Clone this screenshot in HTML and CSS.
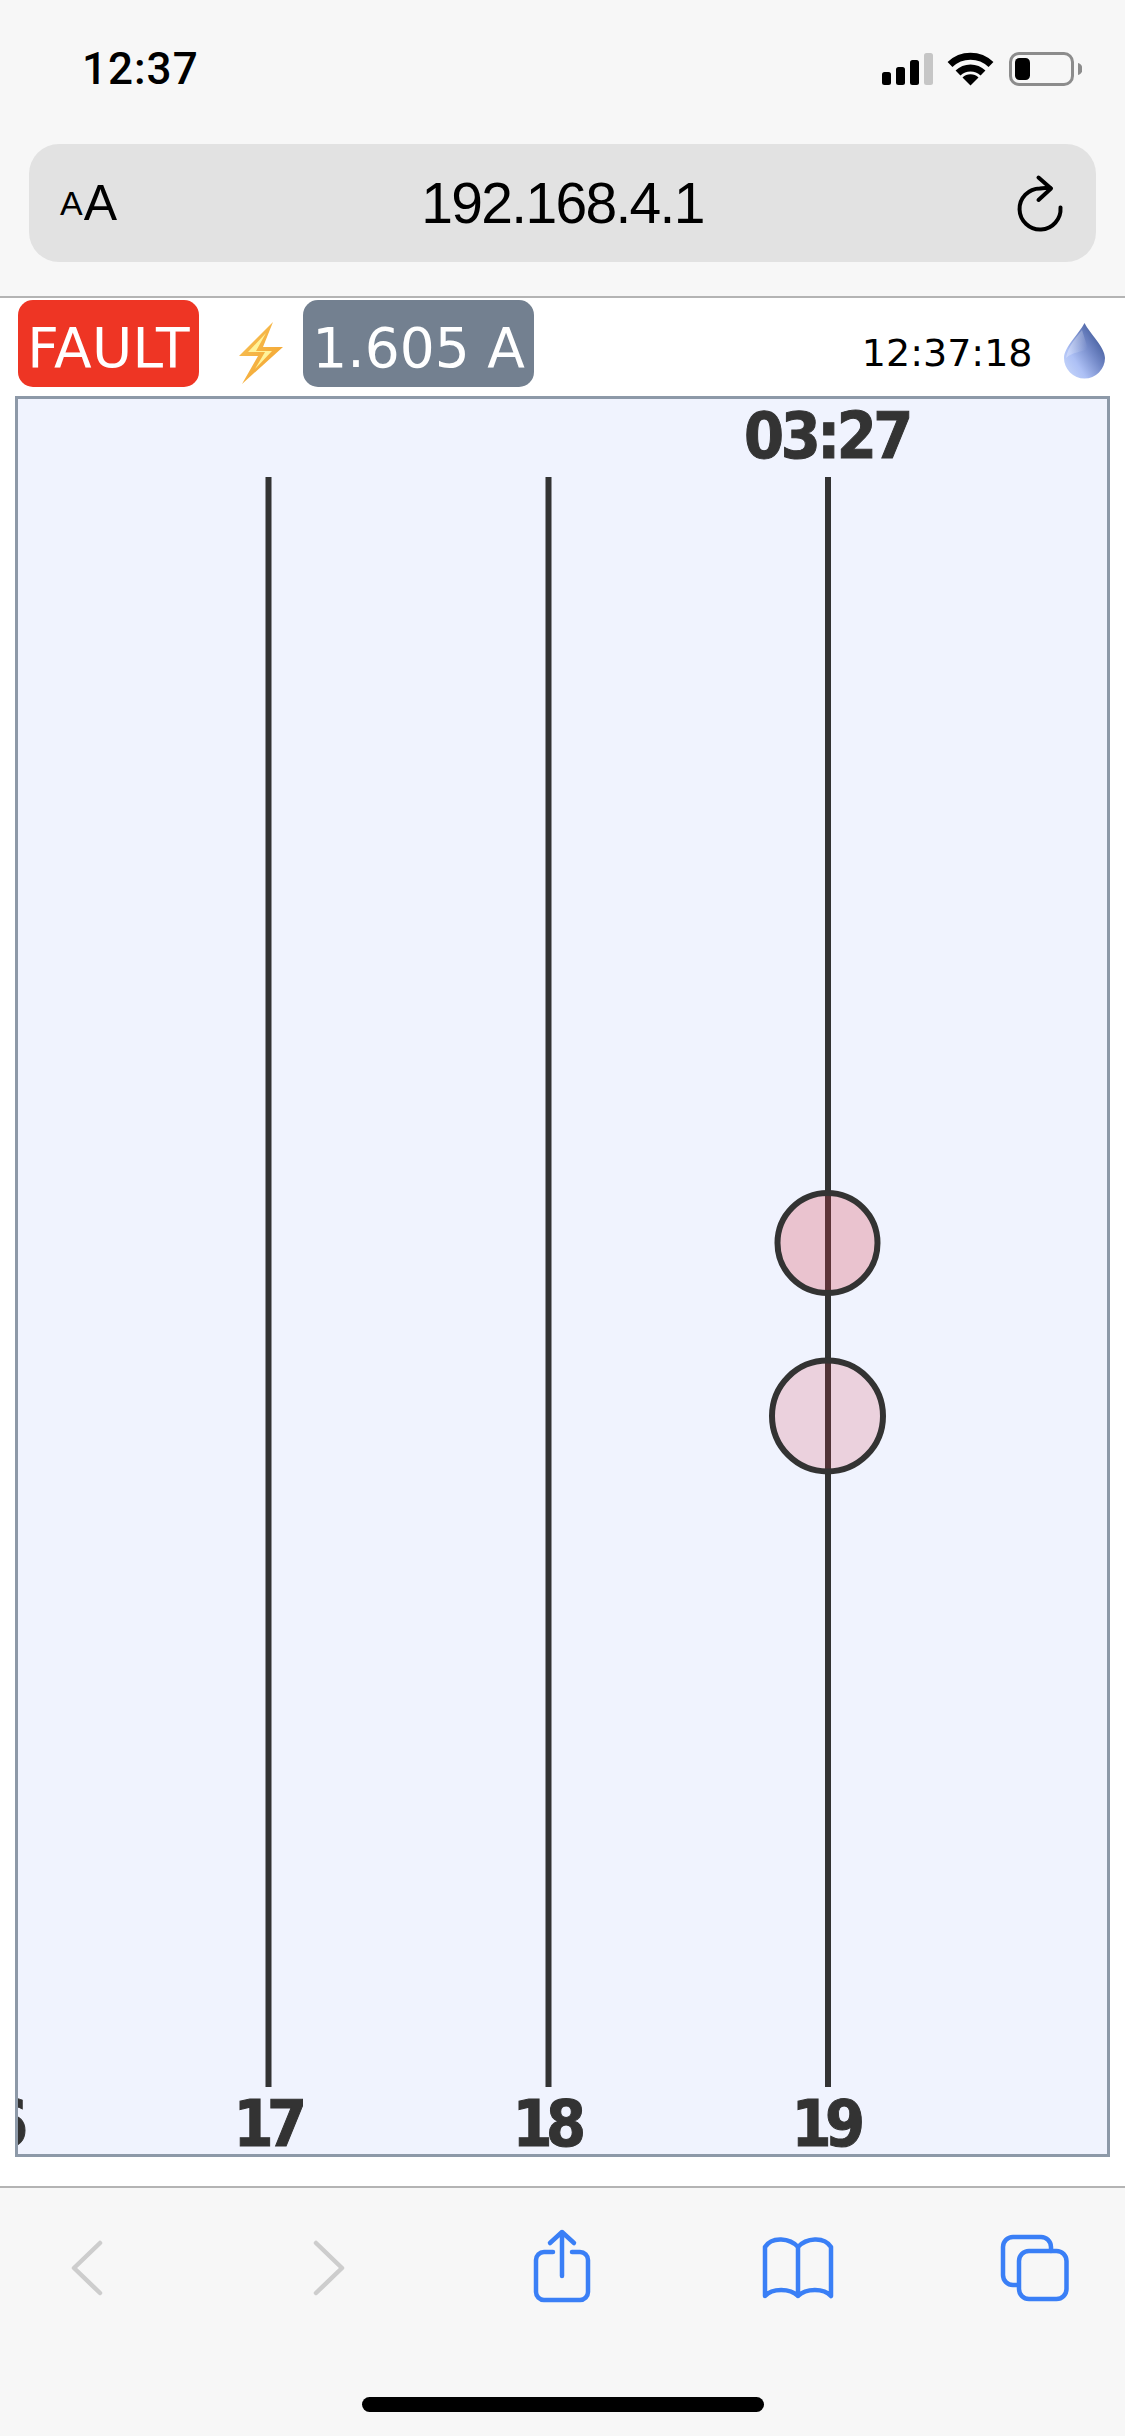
FILE: index.html
```html
<!DOCTYPE html>
<html lang="en">
<head>
<meta charset="utf-8">
<title>192.168.4.1</title>
<link rel="stylesheet" href="styles.css">
</head>
<body>
<div class="phone">
  <header class="top-chrome">
    <div class="status">
      <span class="status-time">12:37</span>
      <svg class="status-icons" viewBox="882 50 200 38" width="200" height="38">
        <rect class="ink" x="882" y="72" width="9" height="13" rx="2.5"/>
        <rect class="ink" x="896" y="67" width="9" height="18" rx="2.5"/>
        <rect class="ink" x="910" y="60" width="9" height="25" rx="2.5"/>
        <rect class="bar-off" x="924" y="53" width="9" height="32" rx="2.5"/>
        <path class="wifi" d="M950 64.5a29.5 29.5 0 0 1 41 0"/>
        <path class="wifi" d="M958 73a18 18 0 0 1 25 0"/>
        <path class="ink" d="M970.5 85.5l-8-8a11.5 11.5 0 0 1 16 0z"/>
        <rect class="batt" x="1010.5" y="53.5" width="62" height="31" rx="8.5"/>
        <rect class="ink" x="1015" y="58" width="15" height="22" rx="4.5"/>
        <path class="batt-nub" d="M1078 63c3 1 4.500 3 4.500 6s-1.500 5-4.500 6z"/>
      </svg>
    </div>
    <div class="address">
      <span class="aa"><span class="aa-small">A</span><span class="aa-big">A</span></span>
      <span class="url">192.168.4.1</span>
      <svg class="reload" viewBox="1014 172 52 62" width="52" height="62">
        <path class="reload-stroke" d="M1060.500 207.500A20.500 20.500 0 1 1 1040 188.500C1044 187.500 1047 187.800 1050.500 188.300"/>
        <path class="reload-stroke" d="M1038.500 177.500L1051 188.500L1038.500 200"/>
      </svg>
    </div>
  </header>

  <main class="page">
    <div class="toolbar">
      <span class="badge badge-fault">FAULT</span>
      <svg class="bolt" viewBox="238 321 46 64" width="46" height="64">
        <defs>
          <linearGradient id="boltEdge" x1="0" y1="0" x2="1" y2="1">
            <stop offset="0" stop-color="#f7c45a"/>
            <stop offset="1" stop-color="#f3a02a"/>
          </linearGradient>
        </defs>
        <polygon fill="url(#boltEdge)" points="273,322 239,356 258,356 242,384 283,347 263,347"/>
        <polygon fill="#fff39a" points="266,333 248,352 265,352 255,369 272,351 256,351"/>
      </svg>
      <span class="badge badge-current">1.605 A</span>
      <span class="clock">12:37:18</span>
      <svg class="drop" viewBox="1062 321 45 59" width="45" height="59">
        <defs>
          <linearGradient id="dropFill" x1="0.95" y1="0.25" x2="0.2" y2="0.9">
            <stop offset="0" stop-color="#3e5797"/>
            <stop offset="0.4" stop-color="#7389c8"/>
            <stop offset="0.8" stop-color="#adc0f5"/>
            <stop offset="1" stop-color="#bccdf8"/>
          </linearGradient>
          <linearGradient id="dropShine" x1="0" y1="0" x2="1" y2="0.6">
            <stop offset="0" stop-color="#ffffff" stop-opacity="0.55"/>
            <stop offset="1" stop-color="#ffffff" stop-opacity="0"/>
          </linearGradient>
        </defs>
        <path fill="url(#dropFill)" d="M1084.500 323C1079 334 1064 347 1064 358A20.500 20.500 0 0 0 1105 358C1105 347 1090 334 1084.500 323Z"/>
        <path fill="url(#dropShine)" d="M1082 330C1076 338 1068 346 1066 358C1072 352 1082 352 1088 349Z"/>
      </svg>
    </div>

    <div class="chart">
      <svg class="chart-svg" viewBox="18 399 1089 1755" width="1089" height="1755">
        <defs>
          <clipPath id="plotClip"><rect x="18" y="399" width="1089" height="1755"/></clipPath>
        </defs>
        <text class="chart-label" x="827" y="458">03:27</text>
        <line class="tick" x1="268.500" y1="477" x2="268.500" y2="2087"/>
        <line class="tick" x1="548.500" y1="477" x2="548.500" y2="2087"/>
        <line class="tick" x1="828" y1="477" x2="828" y2="2087"/>
        <circle class="dot dot-a" cx="827.500" cy="1243" r="50"/>
        <circle class="dot dot-b" cx="827.500" cy="1416" r="55.500"/>
        <text class="chart-label axis-label" clip-path="url(#plotClip)" x="-12" y="2146">16</text>
        <text class="chart-label axis-label" x="267" y="2146">17</text>
        <text class="chart-label axis-label" x="546" y="2146">18</text>
        <text class="chart-label axis-label" x="825" y="2146">19</text>
      </svg>
    </div>
  </main>

  <footer class="bottom-chrome">
    <svg class="toolbar-icons" viewBox="0 2228 1125 78" width="1125" height="78">
      <path class="nav-off" d="M100 2243L74 2268L100 2293"/>
      <path class="nav-off" d="M316 2243L342 2268L316 2293"/>
      <path class="nav-on" d="M553 2252H544a8 8 0 0 0-8 8V2292a8 8 0 0 0 8 8H580a8 8 0 0 0 8-8V2260a8 8 0 0 0-8-8H572"/>
      <path class="nav-on" d="M562 2276V2232M550 2243L562 2232L574 2243"/>
      <path class="nav-on" d="M798 2247V2296M798 2247C790 2238 772 2236 765 2247V2296C772 2288 790 2288 798 2296C806 2288 824 2288 831 2296V2247C824 2236 806 2238 798 2247Z"/>
      <path class="nav-on" d="M1017 2285H1013a10 10 0 0 1-10-10V2247a10 10 0 0 1 10-10H1041a10 10 0 0 1 10 10V2251"/>
      <rect class="nav-on" x="1019" y="2251" width="47.500" height="48" rx="10"/>
    </svg>
    <div class="home-indicator"></div>
  </footer>
</div>
</body>
</html>
```
FILE: styles.css
```css
* { box-sizing: border-box; }
html, body { margin: 0; padding: 0; background: #fff; }
.phone {
  width: 1125px;
  height: 2436px;
  display: flex;
  flex-direction: column;
  overflow: hidden;
}
.top-chrome {
  height: 298px;
  flex: none;
  background: #f7f7f7;
  border-bottom: 2px solid #b4b4b4;
  padding: 0 29px;
}
.status {
  height: 144px;
  display: flex;
  align-items: flex-start;
  justify-content: space-between;
  padding: 50px 14px 0 53px;
}
.status-time {
  font: 500 44px/38px Roboto, sans-serif;
  letter-spacing: 1px;
  color: #000;
}
.status-icons { display: block; margin-right: 0; }
.ink { fill: #000; }
.bar-off { fill: #c6c6c6; }
.wifi { fill: none; stroke: #000; stroke-width: 7; }
.batt { fill: none; stroke: #8c8c8c; stroke-width: 3; }
.batt-nub { fill: #8c8c8c; }
.address {
  height: 118px;
  background: #e2e2e2;
  border-radius: 30px;
  position: relative;
  display: flex;
  align-items: center;
  justify-content: center;
}
.aa {
  position: absolute;
  left: 31px;
  top: 41px;
  font-family: "Liberation Sans", sans-serif;
  color: #000;
  line-height: 36px;
  display: flex;
  align-items: flex-end;
  gap: 1px;
}
.aa-small { font-size: 34px; line-height: 36px; }
.aa-big { font-size: 50px; line-height: 36px; }
.url {
  font: 400 57px/1 "Liberation Sans", sans-serif;
  letter-spacing: -1.7px;
  color: #000;
}
.reload {
  position: absolute;
  left: 985px;
  top: 28px;
}
.reload-stroke {
  fill: none;
  stroke: #000;
  stroke-width: 4;
  stroke-linecap: round;
  stroke-linejoin: round;
}
.page {
  flex: 1;
  background: #fff;
  display: flex;
  flex-direction: column;
  min-height: 0;
}
.toolbar {
  height: 98px;
  flex: none;
  display: flex;
  align-items: flex-start;
  padding: 2px 18px 0 18px;
}
.badge {
  height: 87px;
  border-radius: 15px;
  color: #fff;
  font: 400 55px/1 "DejaVu Sans", sans-serif;
  padding-top: 21px;
  display: flex;
  justify-content: center;
}
.badge-fault { width: 181px; background: #ee3524; letter-spacing: 0.3px; }
.badge-current { width: 231px; background: #738090; }
.bolt { margin: 21px 19px 0 39px; display: block; }
.clock {
  margin-left: auto;
  margin-top: 31px;
  font: 400 38px/45px "DejaVu Sans", sans-serif;
  color: #000;
}
.drop { margin: 21px 0 0 29.5px; display: block; }
.chart {
  flex: none;
  height: 1761px;
  margin-left: 15px;
  width: 1095px;
  border: 3px solid #8d99a8;
  background: #f0f3fe;
}
.chart-svg { display: block; overflow: visible; }
.chart-label {
  font-family: "DejaVu Sans", sans-serif;
  font-weight: 700;
  font-stretch: condensed;
  font-size: 64px;
  letter-spacing: -3.5px;
  fill: #333;
  stroke: #333;
  stroke-width: 1;
  text-anchor: middle;
}
.axis-label { letter-spacing: -6.5px; }
.tick { stroke: #333; stroke-width: 6; }
.dot { stroke: #333; stroke-width: 6; }
.dot-a { fill: rgba(215, 58, 72, 0.26); }
.dot-b { fill: rgba(215, 58, 72, 0.18); }
.bottom-chrome {
  height: 250px;
  flex: none;
  background: #f7f7f7;
  border-top: 2px solid #b4b4b4;
  display: flex;
  flex-direction: column;
  align-items: center;
}
.toolbar-icons { display: block; margin-top: 40px; flex: none; }
.nav-off {
  fill: none;
  stroke: #cdcdcd;
  stroke-width: 4.500;
  stroke-linecap: round;
  stroke-linejoin: round;
}
.nav-on {
  fill: none;
  stroke: #3a7ff6;
  stroke-width: 4.500;
  stroke-linecap: round;
  stroke-linejoin: round;
}
.home-indicator {
  width: 402px;
  height: 15px;
  border-radius: 8px;
  background: #000;
  margin-top: 91px;
}
```
